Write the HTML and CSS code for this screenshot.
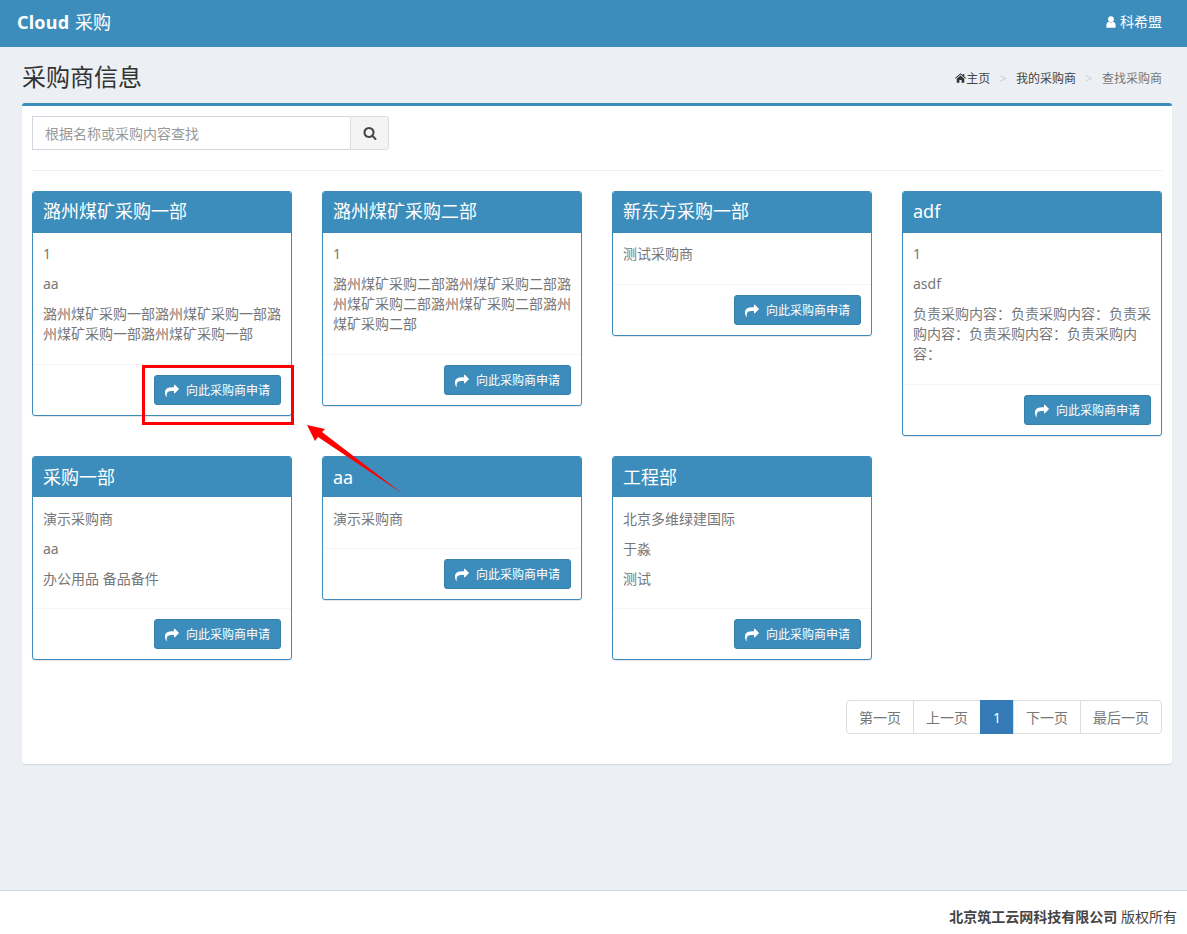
FILE: index.html
```html
<!DOCTYPE html>
<html lang="zh-CN">
<head>
<meta charset="utf-8">
<title>采购商信息</title>
<link rel="stylesheet" href="styles.css">
</head>
<body>
<header class="navbar">
  <a class="brand"><b>Cloud</b> 采购</a>
  <a class="user">
    <svg class="icon-user" viewBox="0 0 12 14"><circle cx="6" cy="3.6" r="3.4"/><path d="M0.5 14V10.2C0.5 8.3 2 7 3.4 6.6 4.1 7.2 5 7.5 6 7.5S7.9 7.2 8.6 6.6C10 7 11.5 8.3 11.5 10.2V14Z"/></svg>
    科希盟
  </a>
</header>
<main class="content">
  <div class="page-head">
    <h1>采购商信息</h1>
    <ol class="crumbs">
      <li><svg class="icon-home" viewBox="0 0 14 12"><path d="M7 0 10 2.6V1H11.8V4.2L14 6.1 13.3 6.9 7 1.5 .7 6.9 0 6.1ZM2.2 7 7 2.9 11.8 7V12H8.4V8.4H5.6V12H2.2Z"/></svg>主页</li>
      <li class="sep">&gt;</li>
      <li>我的采购商</li>
      <li class="sep">&gt;</li>
      <li class="current">查找采购商</li>
    </ol>
  </div>
  <section class="box">
    <form class="search">
      <input class="search-input" type="text" placeholder="根据名称或采购内容查找">
      <button class="search-btn" type="button"><svg viewBox="0 0 1792 1792"><path d="M1216 832q0-185-131.5-316.5t-316.5-131.5-316.5 131.5-131.5 316.5 131.5 316.5 316.5 131.5 316.5-131.5 131.5-316.5zm512 832q0 52-38 90t-90 38q-54 0-90-38l-343-342q-179 124-399 124-143 0-273.5-55.5t-225-150-150-225-55.5-273.5 55.5-273.5 150-225 225-150 273.5-55.5 273.5 55.5 225 150 150 225 55.5 273.5q0 220-124 399l343 343q37 37 37 90z"/></svg></button>
    </form>
    <hr class="rule">
    <div class="grid">
      <article class="card">
        <h3>潞州煤矿采购一部</h3>
        <div class="card-body"><p>1</p><p>aa</p><p>潞州煤矿采购一部潞州煤矿采购一部潞州煤矿采购一部潞州煤矿采购一部</p></div>
        <div class="card-foot"><a class="apply"><svg viewBox="0 0 1792 1792"><use href="#share"/></svg>向此采购商申请</a></div>
      </article>
      <article class="card">
        <h3>潞州煤矿采购二部</h3>
        <div class="card-body"><p>1</p><p>潞州煤矿采购二部潞州煤矿采购二部潞州煤矿采购二部潞州煤矿采购二部潞州煤矿采购二部</p></div>
        <div class="card-foot"><a class="apply"><svg viewBox="0 0 1792 1792"><use href="#share"/></svg>向此采购商申请</a></div>
      </article>
      <article class="card">
        <h3>新东方采购一部</h3>
        <div class="card-body"><p>测试采购商</p></div>
        <div class="card-foot"><a class="apply"><svg viewBox="0 0 1792 1792"><use href="#share"/></svg>向此采购商申请</a></div>
      </article>
      <article class="card">
        <h3>adf</h3>
        <div class="card-body"><p>1</p><p>asdf</p><p>负责采购内容：负责采购内容：负责采购内容：负责采购内容：负责采购内容：</p></div>
        <div class="card-foot"><a class="apply"><svg viewBox="0 0 1792 1792"><use href="#share"/></svg>向此采购商申请</a></div>
      </article>
      <article class="card">
        <h3>采购一部</h3>
        <div class="card-body"><p>演示采购商</p><p>aa</p><p>办公用品 备品备件</p></div>
        <div class="card-foot"><a class="apply"><svg viewBox="0 0 1792 1792"><use href="#share"/></svg>向此采购商申请</a></div>
      </article>
      <article class="card">
        <h3>aa</h3>
        <div class="card-body"><p>演示采购商</p></div>
        <div class="card-foot"><a class="apply"><svg viewBox="0 0 1792 1792"><use href="#share"/></svg>向此采购商申请</a></div>
      </article>
      <article class="card">
        <h3>工程部</h3>
        <div class="card-body"><p>北京多维绿建国际</p><p>于淼</p><p>测试</p></div>
        <div class="card-foot"><a class="apply"><svg viewBox="0 0 1792 1792"><use href="#share"/></svg>向此采购商申请</a></div>
      </article>
    </div>
    <nav class="pager">
      <a>第一页</a><a>上一页</a><a class="active">1</a><a>下一页</a><a>最后一页</a>
    </nav>
  </section>
</main>
<footer class="footer"><b>北京筑工云网科技有限公司</b> 版权所有</footer>
<svg class="defs" width="0" height="0"><defs><path id="share" d="M1792 640q0 26-19 45l-512 512q-19 19-45 19t-45-19-19-45v-256h-224q-98 0-175.5 6t-154 21.5-133 42.5-105.5 69.5-79 103.5-53 143.5-18.5 191.5q0 54 5 121 0 6 2.5 23.5t2.5 26.5q0 15-8.5 25t-23.5 10q-16 0-28-17-7-9-13-22t-13.5-30-10.5-24q-127-285-127-451 0-199 53-333 162-403 875-403h224v-256q0-26 19-45t45-19 45 19l512 512q19 19 19 45z"/></defs></svg>
<div class="mark-box"></div>
<svg class="mark-arrow" viewBox="0 0 1187 934"><polygon points="307,425 325,429 322,432 403,494 318,437 315,441"/></svg>
</body>
</html>
```
FILE: styles.css
```css
* { box-sizing: border-box; }
html, body { margin: 0; height: 100%; }
body {
  position: relative;
  min-height: 934px;
  display: flex;
  flex-direction: column;
  background: #ecf0f5;
  color: #333;
  font: 14px/20px "Noto Sans", "Noto Sans CJK SC", sans-serif;
}
.navbar {
  height: 47px;
  flex: none;
  background: #3c8dbc;
  color: #fff;
  display: flex;
  align-items: center;
  justify-content: space-between;
  padding: 0 25px 3px 17px;
}
.brand { font-size: 18px; word-spacing: 1px; }
.brand b { font-weight: 700; letter-spacing: .2px; }
.user { display: flex; align-items: center; gap: 4px; font-size: 14px; }
.icon-user { width: 10px; height: 12px; fill: #fff; }
.content { flex: 1; padding: 0 15px 0 22px; }
.page-head {
  height: 56px;
  display: flex;
  align-items: center;
  justify-content: space-between;
  padding: 4px 10px 0 0;
}
h1 { margin: 0; font-size: 24px; font-weight: 400; line-height: 60px; color: #333; }
.crumbs {
  list-style: none;
  display: flex;
  margin: 4px 0 0;
  padding: 0;
  font-size: 12px;
  color: #444;
}
.crumbs .sep { color: #ccc; margin: 0 9.5px; }
.crumbs .current { color: #777; }
.icon-home { width: 11px; height: 10px; fill: #333; }
.box {
  height: 661px;
  background: #fff;
  border-top: 3px solid #3c8dbc;
  border-radius: 3px;
  box-shadow: 0 1px 1px rgba(0,0,0,.1);
  padding: 10px;
}
.search { display: flex; width: 357px; height: 34px; }
.search-input {
  flex: 1;
  min-width: 0;
  border: 1px solid #d2d6de;
  border-right: 0;
  padding: 7px 12px 5px;
  font: 14px/20px "Noto Sans", "Noto Sans CJK SC", sans-serif;
  outline: 0;
}
.search-input::placeholder { color: #999; }
.search-btn {
  flex: none;
  width: 39px;
  padding: 0;
  display: flex;
  align-items: center;
  justify-content: center;
  background: #f4f4f4;
  border: 1px solid #ddd;
  border-radius: 0 3px 3px 0;
}
.search-btn svg { width: 14px; height: 14px; fill: #444; }
.rule { margin: 20px 0; border: 0; border-top: 1px solid #eee; }
.grid {
  display: grid;
  grid-template-columns: repeat(4, 260px);
  column-gap: 30px;
  row-gap: 20px;
  align-items: start;
}
.card {
  border: 1px solid #3c8dbc;
  border-radius: 3px;
  background: #fff;
  box-shadow: 0 1px 1px rgba(0,0,0,.1);
  overflow: hidden;
}
.card h3 {
  margin: -1px -1px 0;
  background: #3c8dbc;
  color: #fff;
  font-size: 18px;
  font-weight: 400;
  line-height: 20px;
  padding: 10px 11px;
  height: 42px;
}
.card-body { padding: 11px 10px 10px; color: #777; }
.card-body p { margin: 0 0 10px; }
.card:nth-child(n+5) h3 { height: 41px; padding-top: 11px; padding-bottom: 9px; }
.card:nth-child(n+5) .card-body { padding: 12px 10px 9px; }
.card-foot {
  border-top: 1px solid #f4f4f4;
  padding: 10px;
  display: flex;
  justify-content: flex-end;
}
.apply {
  display: flex;
  align-items: center;
  height: 30px;
  padding: 2px 10px 0;
  background: #3c8dbc;
  border: 1px solid #367fa9;
  border-radius: 3px;
  color: #fff;
  font-size: 12px;
}
.apply svg { width: 14px; height: 14px; fill: #fff; margin-right: 7px; }
.pager { display: flex; justify-content: flex-end; margin-top: 40px; }
.pager a {
  height: 34px;
  padding: 7px 12px 5px;
  margin-left: -1px;
  border: 1px solid #ddd;
  color: #777;
  background: #fff;
}
.pager a:first-child { border-radius: 4px 0 0 4px; }
.pager a:last-child { border-radius: 0 4px 4px 0; }
.pager a.active { background: #337ab7; border-color: #337ab7; color: #fff; font-weight: 400; }
.footer {
  height: 44px;
  flex: none;
  background: #fff;
  border-top: 1px solid #d2d6de;
  text-align: right;
  padding: 16px 10px 0;
  color: #444;
  font-size: 14px;
}
.defs { position: absolute; }
.mark-box {
  position: absolute;
  left: 142px;
  top: 365px;
  width: 152px;
  height: 60px;
  border: 3px solid #f00;
}
.mark-arrow { position: absolute; left: 0; top: 0; width: 1187px; height: 934px; pointer-events: none; }
.mark-arrow polygon { fill: #f00; }
```
